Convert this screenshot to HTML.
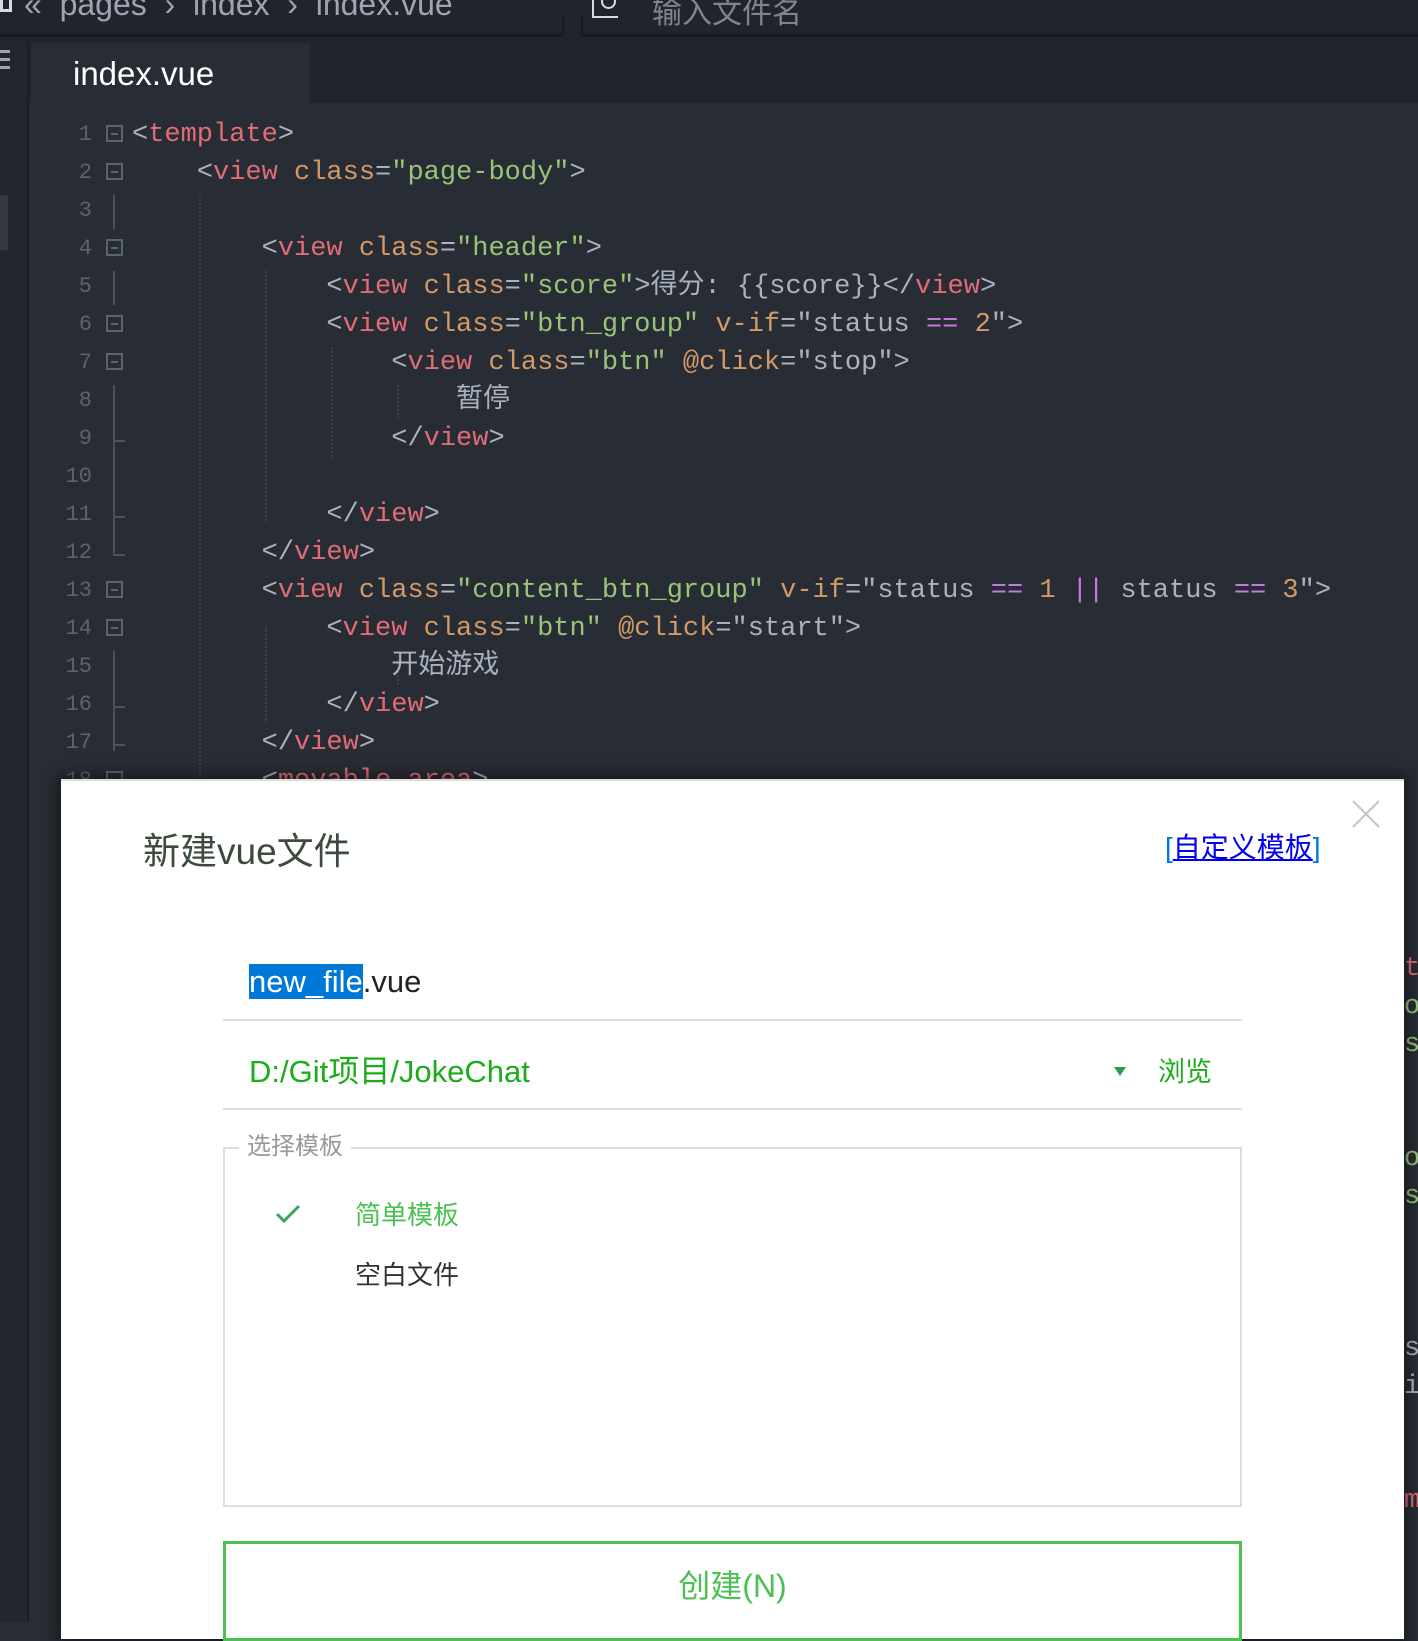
<!DOCTYPE html>
<html><head><meta charset="utf-8"><style>
*{margin:0;padding:0;box-sizing:border-box}
body{width:1418px;height:1622px;overflow:hidden;background:#282c34;position:relative;font-family:"Liberation Sans","Noto Sans CJK SC",sans-serif}
.abs{position:absolute}
.code{position:absolute;left:0;top:3px;font-family:"Liberation Mono","Noto Sans CJK SC",monospace;font-size:27px;white-space:pre;color:#abb2bf}
.ln{position:absolute;width:92px;text-align:right;left:0;font-family:"Liberation Mono",monospace;font-size:22px;color:#5c6370;line-height:38px}
.l{position:absolute;left:132px;height:38px;line-height:38px}
.t{color:#e06c75}.a{color:#d19a66}.s{color:#98c379}.p{color:#c678dd}.c{color:#abb2bf}
.fold{position:absolute;left:106px;width:17px;height:17px;border:2px solid #5c6370}
.fold:after{content:"";position:absolute;left:3px;right:3px;top:6px;height:2px;background:#5c6370}
.vl{position:absolute;left:113px;width:2px;background:#4b5160}
.tk{position:absolute;left:113px;width:12px;height:2px;background:#4b5160}
.guide{position:absolute;width:0;border-left:2px dotted #3b4048}
</style></head><body>
<div class="abs" style="left:0;top:0;width:27px;height:1622px;background:#23262d"></div>
<div class="abs" style="left:27px;top:40px;width:2px;height:1582px;background:#1b1d22"></div>
<div class="abs" style="left:0;top:195px;width:8px;height:55px;background:#333842"></div>
<div class="abs" style="left:0;top:50px;width:10px;height:3px;background:#9da5b4"></div>
<div class="abs" style="left:0;top:58px;width:10px;height:3px;background:#9da5b4"></div>
<div class="abs" style="left:0;top:66px;width:10px;height:3px;background:#9da5b4"></div>
<div class="abs" style="left:0;top:0;width:1418px;height:40px;background:#21252b"></div>
<div class="abs" style="left:0;top:34px;width:562px;height:3px;background:#181a1f"></div>
<div class="abs" style="left:581px;top:34px;width:837px;height:3px;background:#181a1f"></div>
<div class="abs" style="left:562px;top:14px;width:2px;height:22px;background:#181a1f"></div>
<div class="abs" style="left:581px;top:14px;width:2px;height:22px;background:#181a1f"></div>
<div class="abs" style="left:0;top:-6px;width:12px;height:18px;border:3px solid #d7dae0;border-top:none"></div>
<div class="abs" style="left:24px;top:-14px;font-size:32px;color:#9da5b4;white-space:pre">«  pages  ›  index  ›  index.vue</div>
<div class="abs" style="left:592px;top:-4px;width:26px;height:22px;border:2px solid #d7dae0;border-top:none;border-right:none"></div>
<div class="abs" style="left:601px;top:-6px;width:15px;height:15px;border:2px solid #d7dae0;border-radius:50%"></div>
<div class="abs" style="left:652px;top:-12px;font-size:30px;color:#7f848e">输入文件名</div>
<div class="abs" style="left:29px;top:40px;width:1389px;height:63px;background:#21252b"></div>
<div class="abs" style="left:31px;top:43px;width:279px;height:60px;background:#282c34"></div>
<div class="abs" style="left:73px;top:55px;font-size:33px;color:#fff">index.vue</div>
<div class="ln" style="top:116px">1</div><div class="ln" style="top:154px">2</div><div class="ln" style="top:192px">3</div><div class="ln" style="top:230px">4</div><div class="ln" style="top:268px">5</div><div class="ln" style="top:306px">6</div><div class="ln" style="top:344px">7</div><div class="ln" style="top:382px">8</div><div class="ln" style="top:420px">9</div><div class="ln" style="top:458px">10</div><div class="ln" style="top:496px">11</div><div class="ln" style="top:534px">12</div><div class="ln" style="top:572px">13</div><div class="ln" style="top:610px">14</div><div class="ln" style="top:648px">15</div><div class="ln" style="top:686px">16</div><div class="ln" style="top:724px">17</div><div class="ln" style="top:762px">18</div>
<div class="fold" style="top:125px"></div><div class="fold" style="top:163px"></div><div class="fold" style="top:239px"></div><div class="fold" style="top:315px"></div><div class="fold" style="top:353px"></div><div class="fold" style="top:581px"></div><div class="fold" style="top:619px"></div><div class="fold" style="top:771px"></div>
<div class="vl" style="top:195px;height:34px"></div>
<div class="vl" style="top:271px;height:34px"></div>
<div class="vl" style="top:385px;height:170px"></div>
<div class="tk" style="top:440px"></div><div class="tk" style="top:516px"></div><div class="tk" style="top:554px"></div>
<div class="vl" style="top:651px;height:100px"></div>
<div class="tk" style="top:706px"></div><div class="tk" style="top:744px"></div>
<div class="guide" style="left:199px;top:195px;height:590px"></div>
<div class="guide" style="left:265px;top:271px;height:250px"></div>
<div class="guide" style="left:265px;top:627px;height:96px"></div>
<div class="guide" style="left:331px;top:347px;height:110px"></div>
<div class="guide" style="left:397px;top:385px;height:34px"></div>
<div class="guide" style="left:397px;top:651px;height:34px"></div>
<div class="code">
<div class="l" style="top:113px"><span class="c">&lt;</span><span class="t">template</span><span class="c">&gt;</span></div>
<div class="l" style="top:151px">    <span class="c">&lt;</span><span class="t">view</span> <span class="a">class</span>=<span class="s">"page-body"</span>&gt;</div>
<div class="l" style="top:227px">        &lt;<span class="t">view</span> <span class="a">class</span>=<span class="s">"header"</span>&gt;</div>
<div class="l" style="top:265px">            &lt;<span class="t">view</span> <span class="a">class</span>=<span class="s">"score"</span>&gt;得分: {{score}}&lt;/<span class="t">view</span>&gt;</div>
<div class="l" style="top:303px">            &lt;<span class="t">view</span> <span class="a">class</span>=<span class="s">"btn_group"</span> <span class="a">v-if</span>="status <span class="p">==</span> <span class="a">2</span>"&gt;</div>
<div class="l" style="top:341px">                &lt;<span class="t">view</span> <span class="a">class</span>=<span class="s">"btn"</span> <span class="a">@click</span>="stop"&gt;</div>
<div class="l" style="top:379px">                    暂停</div>
<div class="l" style="top:417px">                &lt;/<span class="t">view</span>&gt;</div>
<div class="l" style="top:493px">            &lt;/<span class="t">view</span>&gt;</div>
<div class="l" style="top:531px">        &lt;/<span class="t">view</span>&gt;</div>
<div class="l" style="top:569px">        &lt;<span class="t">view</span> <span class="a">class</span>=<span class="s">"content_btn_group"</span> <span class="a">v-if</span>="status <span class="p">==</span> <span class="a">1</span> <span class="p">||</span> status <span class="p">==</span> <span class="a">3</span>"&gt;</div>
<div class="l" style="top:607px">            &lt;<span class="t">view</span> <span class="a">class</span>=<span class="s">"btn"</span> <span class="a">@click</span>="start"&gt;</div>
<div class="l" style="top:645px">                开始游戏</div>
<div class="l" style="top:683px">            &lt;/<span class="t">view</span>&gt;</div>
<div class="l" style="top:721px">        &lt;/<span class="t">view</span>&gt;</div>
<div class="l" style="top:759px">        &lt;<span class="t">movable-area</span>&gt;</div>
</div>
<div class="abs" style="left:1404px;top:950px;font-family:'Liberation Mono',monospace;font-size:27px;line-height:38px;white-space:pre"><span class="t">t</span>
<span class="s">o</span>
<span class="s">s</span>


<span class="s">o</span>
<span class="s">s</span>



<span class="c">s</span>
<span class="c">i</span>


<span class="t">m</span></div>
<div class="abs" style="left:61px;top:779px;width:1343px;height:860px;background:#fff;box-shadow:0 0 14px 4px rgba(0,0,0,.45);border-top:2px solid #ddd"></div>
<div class="abs" style="left:143px;top:829px;font-size:37px;color:#3d4a3d;line-height:46px">新建vue文件</div>
<div class="abs" style="left:1165px;top:830px;font-size:28px;line-height:36px;color:#0078d7">[<span style="color:#0000ee;text-decoration:underline">自定义模板</span>]</div>
<svg class="abs" style="left:1352px;top:800px" width="28" height="28"><path d="M1 1L27 27M27 1L1 27" stroke="#c4c4c4" stroke-width="2"/></svg>
<div class="abs" style="left:249px;top:962px;font-size:31px;line-height:40px;color:#222"><span style="background:#0078d7;color:#fff">new_file</span>.vue</div>
<div class="abs" style="left:223px;top:1019px;width:1019px;height:2px;background:#ddd"></div>
<div class="abs" style="left:249px;top:1052px;font-size:31px;line-height:40px;color:#1aad19">D:/Git项目/JokeChat</div>
<svg class="abs" style="left:1114px;top:1067px" width="12" height="10"><path d="M0 0H12L6 9Z" fill="#2e9e4e"/></svg>
<div class="abs" style="left:1158px;top:1054px;font-size:27px;line-height:36px;color:#1aad19">浏览</div>
<div class="abs" style="left:223px;top:1108px;width:1019px;height:2px;background:#ddd"></div>
<div class="abs" style="left:223px;top:1147px;width:1019px;height:360px;border:2px solid #ddd"></div>
<div class="abs" style="left:239px;top:1130px;padding:0 8px;background:#fff;font-size:24px;line-height:34px;color:#999">选择模板</div>
<svg class="abs" style="left:275px;top:1204px" width="26" height="20"><path d="M2 10L9 17L24 2" stroke="#3aa757" stroke-width="3" fill="none"/></svg>
<div class="abs" style="left:355px;top:1198px;font-size:26px;line-height:34px;color:#4cc153">简单模板</div>
<div class="abs" style="left:355px;top:1258px;font-size:26px;line-height:34px;color:#333">空白文件</div>
<div class="abs" style="left:223px;top:1541px;width:1019px;height:100px;border:3px solid #4cc153"></div>
<div class="abs" style="left:223px;top:1566px;width:1019px;text-align:center;font-size:32px;line-height:40px;color:#4cc153">创建(N)</div>
</body></html>
